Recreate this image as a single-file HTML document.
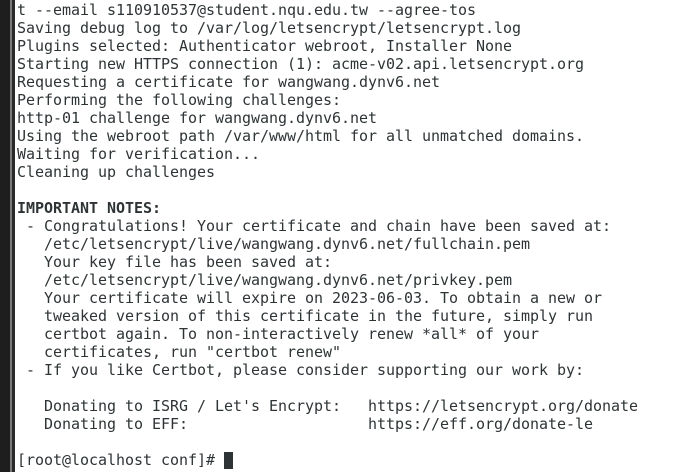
<html><head><style>
body{margin:0;width:675px;height:472px;background:#fff;overflow:hidden;position:relative}
.l{position:absolute;left:0;top:0;width:10px;height:472px;background:#1e1e1e}
.g{position:absolute;left:10px;top:0;width:2px;height:472px;background:#7a7a7a}
.d{position:absolute;left:12px;top:0;width:3px;height:472px;background:#2a2a2a}
pre{position:absolute;left:17px;top:1px;margin:0;font-family:"DejaVu Sans Mono",monospace;font-size:15px;line-height:18px;color:#2e3436;letter-spacing:-0.03px}
.c{display:inline-block;width:9px;height:17px;background:#2e3436;vertical-align:-4px}
</style></head><body><div class="l"></div><div class="g"></div><div class="d"></div>
<pre>t --email s110910537@student.nqu.edu.tw --agree-tos
Saving debug log to /var/log/letsencrypt/letsencrypt.log
Plugins selected: Authenticator webroot, Installer None
Starting new HTTPS connection (1): acme-v02.api.letsencrypt.org
Requesting a certificate for wangwang.dynv6.net
Performing the following challenges:
http-01 challenge for wangwang.dynv6.net
Using the webroot path /var/www/html for all unmatched domains.
Waiting for verification...
Cleaning up challenges

<b>IMPORTANT NOTES:</b>
 - Congratulations! Your certificate and chain have been saved at:
   /etc/letsencrypt/live/wangwang.dynv6.net/fullchain.pem
   Your key file has been saved at:
   /etc/letsencrypt/live/wangwang.dynv6.net/privkey.pem
   Your certificate will expire on 2023-06-03. To obtain a new or
   tweaked version of this certificate in the future, simply run
   certbot again. To non-interactively renew *all* of your
   certificates, run "certbot renew"
 - If you like Certbot, please consider supporting our work by:

   Donating to ISRG / Let's Encrypt:   https://letsencrypt.org/donate
   Donating to EFF:                    https://eff.org/donate-le

[root@localhost conf]# <span class="c"></span></pre>
</body></html>
